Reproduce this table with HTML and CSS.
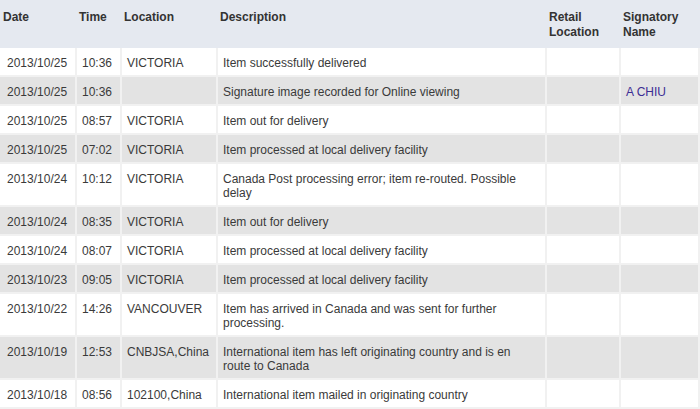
FILE: index.html
```html
<!DOCTYPE html>
<html>
<head>
<meta charset="utf-8">
<link rel="stylesheet" href="styles.css">
</head>
<body>
<table class="track">
  <colgroup>
    <col class="c-date"><col class="c-time"><col class="c-loc"><col class="c-desc"><col class="c-retail"><col class="c-sig">
  </colgroup>
  <thead>
    <tr>
      <th>Date</th><th>Time</th><th>Location</th><th>Description</th><th>Retail Location</th><th>Signatory Name</th>
    </tr>
  </thead>
  <tbody>
    <tr><td>2013/10/25</td><td>10:36</td><td>VICTORIA</td><td>Item successfully delivered</td><td></td><td></td></tr>
    <tr class="alt"><td>2013/10/25</td><td>10:36</td><td></td><td>Signature image recorded for Online viewing</td><td></td><td><a class="sig" href="#">A CHIU</a></td></tr>
    <tr><td>2013/10/25</td><td>08:57</td><td>VICTORIA</td><td>Item out for delivery</td><td></td><td></td></tr>
    <tr class="alt"><td>2013/10/25</td><td>07:02</td><td>VICTORIA</td><td>Item processed at local delivery facility</td><td></td><td></td></tr>
    <tr><td>2013/10/24</td><td>10:12</td><td>VICTORIA</td><td>Canada Post processing error; item re-routed. Possible delay</td><td></td><td></td></tr>
    <tr class="alt"><td>2013/10/24</td><td>08:35</td><td>VICTORIA</td><td>Item out for delivery</td><td></td><td></td></tr>
    <tr><td>2013/10/24</td><td>08:07</td><td>VICTORIA</td><td>Item processed at local delivery facility</td><td></td><td></td></tr>
    <tr class="alt"><td>2013/10/23</td><td>09:05</td><td>VICTORIA</td><td>Item processed at local delivery facility</td><td></td><td></td></tr>
    <tr><td>2013/10/22</td><td>14:26</td><td>VANCOUVER</td><td>Item has arrived in Canada and was sent for further processing.</td><td></td><td></td></tr>
    <tr class="alt"><td>2013/10/19</td><td>12:53</td><td>CNBJSA,China</td><td>International item has left originating country and is en route to Canada</td><td></td><td></td></tr>
    <tr><td>2013/10/18</td><td>08:56</td><td>102100,China</td><td>International item mailed in originating country</td><td></td><td></td></tr>
  </tbody>
</table>
</body>
</html>
```

FILE: styles.css
```css
html, body {
  margin: 0;
  padding: 0;
  background: #ffffff;
}

.track {
  width: 700px;
  table-layout: fixed;
  border-collapse: separate;
  border-spacing: 0;
  font-family: "Liberation Sans", Arial, sans-serif;
  font-size: 12px;
  line-height: 14px;
  color: #3a3a3a;
}

.c-date { width: 77px; }
.c-time { width: 45px; }
.c-loc { width: 96px; }
.c-desc { width: 329px; }
.c-retail { width: 74px; }
.c-sig { width: 79px; }

.track th {
  box-sizing: border-box;
  height: 48px;
  padding: 10px 2px 0 2px;
  background: #e5e9f0;
  color: #333333;
  font-weight: bold;
  line-height: 15px;
  text-align: left;
  vertical-align: top;
}

.track th:first-child {
  padding-left: 3px;
}

.track td {
  padding: 8px 5px 5px 5px;
  vertical-align: top;
  border-right: 2px solid #f1f1f1;
  border-bottom: 2px solid #f1f1f1;
  background: #ffffff;
}

.track td:first-child {
  padding-left: 7px;
}

.track tr.alt td {
  background: #e3e3e3;
}

.sig {
  color: #3b2d94;
  text-decoration: none;
}
```
